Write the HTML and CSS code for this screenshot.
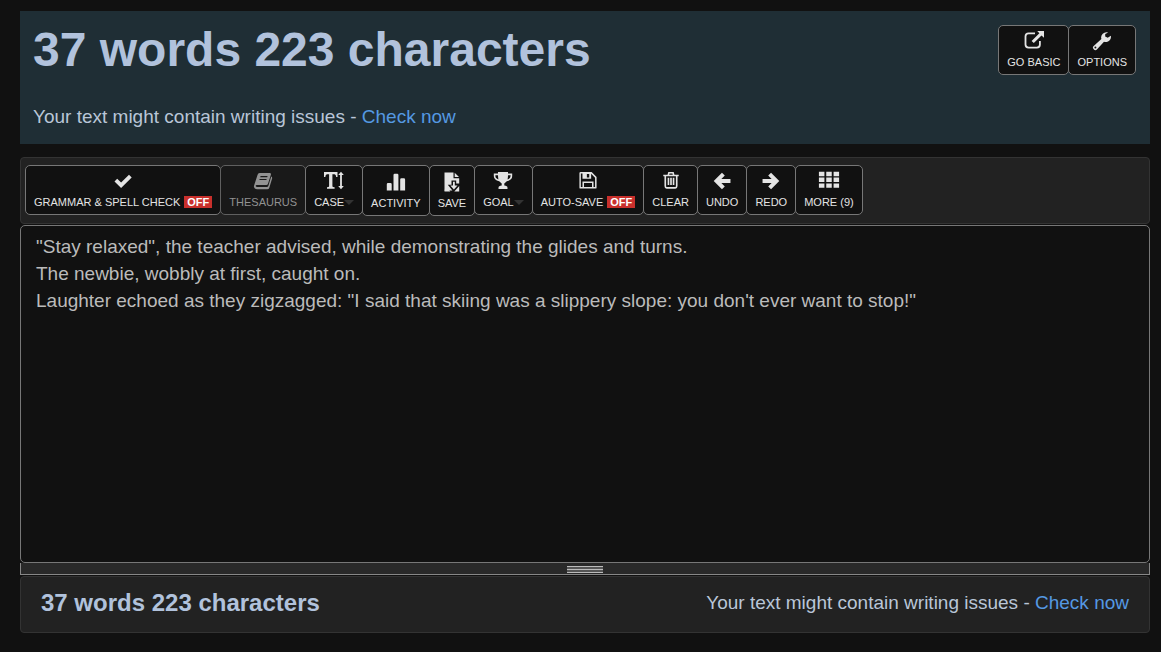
FILE: index.html
```
<!DOCTYPE html>
<html lang="en">
<head>
<meta charset="utf-8">
<meta name="viewport" content="width=device-width, initial-scale=1">
<title>Word Counter</title>
<link rel="stylesheet" href="styles.css">
</head>
<body>
<main class="page">
  <header class="summary">
    <div class="summary-text">
      <h1 class="summary-title">37 words 223 characters</h1>
      <p class="notice">Your text might contain writing issues - <a class="link" href="#check">Check now</a></p>
    </div>
    <nav class="buttons">
      <button class="btn" type="button">
        <svg class="icon" viewBox="0 1 20 20"><path d="M11 3.400H4.600Q1.500 3.400 1.500 6.400v8.200q0 3 3.100 3h8.300q3 0 3-3v-3.500" fill="none" stroke="currentColor" stroke-width="1.800"/><path d="M13 .8h7v7l-2.500-2.400-7.700 7.700-2.200-2.200 7.800-7.700z"/></svg>
        <span class="label">GO BASIC</span>
      </button>
      <button class="btn" type="button">
        <svg class="icon" viewBox="0 0 20 20"><path fill-rule="evenodd" d="M16.200 1.500a5.300 5.300 0 0 0-6.800 6.600L1.700 14.900a2.400 2.400 0 0 0 3.400 3.400l6.900-7.600a5.300 5.300 0 0 0 6.900-6l-3.200 2.100-2.500-1.300v-2.500zM3.400 15.600a1 1 0 1 1 0 2 1 1 0 0 1 0-2z"/></svg>
        <span class="label">OPTIONS</span>
      </button>
    </nav>
  </header>

  <section class="toolbar buttons" aria-label="Editor tools">
    <button class="btn" type="button">
      <svg class="icon" viewBox="0 0 20 20"><path d="M1.500 10.500 4.200 7.800l3.900 3.800 7.900-7.900 2.700 2.700L8.100 17z"/></svg>
      <span class="label">GRAMMAR &amp; SPELL CHECK <span class="badge">OFF</span></span>
    </button>
    <button class="btn btn-dim" type="button" disabled>
      <svg class="icon" viewBox="0 0 20 20"><path fill-rule="evenodd" d="M6.600 2h10.200q1.500.2 1.100 1.700L15 12.700q-.4 1.200-1.700 1.200H3.800q-1.400.3-1 1.400.3.700 1.300.7h9.700q1.100 0 1.500-1.100l2.900-9.300q1.300.6.900 1.900l-2.800 9.200q-.5 1.500-2 1.500H3.900q-2 0-2.800-1.900-.4-1 0-1.900L4.500 4Q5 2 6.600 2zm1 3.100-.4 1.200h7l.4-1.200zm-.9 2.800-.4 1.200h7l.4-1.200z"/></svg>
      <span class="label">THESAURUS</span>
    </button>
    <button class="btn" type="button">
      <svg class="icon" viewBox="0 0 20 20"><path d="M0 1h13.500v5h-1.300q-.2-2.700-1.700-2.700H8.400v12q0 1 2.200 1v1.400H3v-1.400q2.100 0 2.100-1v-12H3q-1.500 0-1.700 2.700H0z"/><path d="m17 .8 2.800 3.300h-1.900v10.800h1.900L17 18.200l-2.800-3.300h1.900V4.100h-1.900z"/></svg>
      <span class="label">CASE<span class="caret"></span></span>
    </button>
    <button class="btn btn-tall" type="button">
      <svg class="icon" viewBox="0 0 20 20"><path d="M.8 12.200q0-1.200 1.200-1.200h2.500q1.200 0 1.200 1.200V18.500H.8zM7.500 3q0-1.200 1.200-1.200h2.500q1.200 0 1.200 1.200v15.500H7.500zM14.200 7.500q0-1.200 1.200-1.200h2.500q1.200 0 1.200 1.200v11h-4.900z"/></svg>
      <span class="label">ACTIVITY</span>
    </button>
    <button class="btn btn-tall" type="button">
      <svg class="icon" viewBox="0 0 20 20"><path d="M2.500.5h9v5.700h5.700v5.300h-3V8.500H9.500v4.200H5.800l4.600 5.800H2.500z"/><path d="M12.700.7 17 5h-4.300zM11 9.800h1.800v3.800h2.700l-3.600 3.900-3.600-3.900H11zM2.500 18l2.800-2.400 3 3.900H2.500zM17.200 14v5.500h-4.900z"/></svg>
      <span class="label">SAVE</span>
    </button>
    <button class="btn" type="button">
      <svg class="icon" viewBox="0 0 20 20"><path fill-rule="evenodd" d="M5 1h10v1.600h4.200v2.500q0 4.100-5.400 5.200-1.500 1.600-2.500 2.100v2.100q3.200.2 3.200 2.300v1.200h-9v-1.200q0-2.100 3.200-2.300v-2.100q-1-.5-2.500-2.100Q.8 9.200.8 5.100V2.600H5zM2.400 4.200v.9q0 2.500 3 3.400Q5 6.300 5 4.200zm12.600 0q0 2.100-.4 4.300 3-.9 3-3.400v-.9z"/></svg>
      <span class="label">GOAL<span class="caret"></span></span>
    </button>
    <button class="btn" type="button">
      <svg class="icon" viewBox="-.5 0 21 21"><path fill-rule="evenodd" d="M2.500 1h11.300L19 6.200v11.300q0 1-1 1H2q-1 0-1-1V2q0-1 1.500-1zm0 1.600v14.300h1.700V11h11.600v5.900h1.600V7L13.300 2.900v5.300H4.200V2.600zm3.300 10v4.300h8.400v-4.300zm3-9.400v3.500h2.500V3.200z"/></svg>
      <span class="label">AUTO-SAVE <span class="badge">OFF</span></span>
    </button>
    <button class="btn" type="button">
      <svg class="icon" viewBox="-1 0 22 22"><path fill="none" stroke="currentColor" stroke-width="1.800" d="M1.500 5h17M7 4.500l.7-2.600h4.600l.7 2.600M3.700 5v11.500q0 2 1.500 2h9.600q1.500 0 1.500-2V5M7.200 7.500v8M10 7.500v8M12.800 7.500v8"/></svg>
      <span class="label">CLEAR</span>
    </button>
    <button class="btn" type="button">
      <svg class="icon" viewBox="-1 -1 22 22"><path fill="none" stroke="currentColor" stroke-width="4.400" d="M11.500 2.500 4 10l7.500 7.500M4.500 10h14.800"/></svg>
      <span class="label">UNDO</span>
    </button>
    <button class="btn" type="button">
      <svg class="icon" viewBox="-1 -1 22 22"><path fill="none" stroke="currentColor" stroke-width="4.400" d="M8.500 2.500 16 10l-7.500 7.500M15.500 10H.7"/></svg>
      <span class="label">REDO</span>
    </button>
    <button class="btn" type="button">
      <svg class="icon icon-wide" viewBox="0 0 24 20"><path d="M1 0h6v4.700H1zM9 0h6v4.700H9zM17 0h6v4.700h-6zM1 6.300h6V11H1zM9 6.300h6V11H9zM17 6.300h6V11h-6zM1 12.600h6v4.700H1zM9 12.600h6v4.700H9zM17 12.600h6v4.700h-6z"/></svg>
      <span class="label">MORE (9)</span>
    </button>
  </section>

  <textarea class="editor" rows="12" aria-label="Your text" spellcheck="false">"Stay relaxed", the teacher advised, while demonstrating the glides and turns.
The newbie, wobbly at first, caught on.
Laughter echoed as they zigzagged: "I said that skiing was a slippery slope: you don't ever want to stop!"</textarea>
  <div class="resizer"><span class="grip"></span></div>

  <footer class="footer">
    <h2 class="footer-title">37 words 223 characters</h2>
    <p class="notice">Your text might contain writing issues - <a class="link" href="#check">Check now</a></p>
  </footer>
</main>
</body>
</html>
```
FILE: styles.css
```
* {
  box-sizing: border-box;
}

body {
  margin: 0;
  background: #111;
  color: #b1c2dc;
  font-family: "Liberation Sans", Arial, sans-serif;
}

h1, h2, p {
  margin: 0;
}

.page {
  display: flex;
  flex-direction: column;
  padding: 11px 11px 19px 20px;
}

.summary {
  display: flex;
  justify-content: space-between;
  align-items: flex-start;
  margin-bottom: 13px;
  padding: 14px 14px 13px 13px;
  background: #1f2e35;
}

.summary-title {
  margin-bottom: 28px;
  font-size: 48px;
  line-height: 50px;
}

.notice {
  color: #b9c6d8;
  font-size: 19px;
  line-height: 28px;
}

.link {
  color: #5599e2;
  text-decoration: none;
}

.buttons {
  display: flex;
  align-items: flex-start;
}

.btn {
  display: flex;
  flex-direction: column;
  align-items: center;
  gap: 3px;
  padding: 5px 8px 4px;
  border: 1px solid #777;
  border-radius: 5px;
  background: #111;
  color: #e4e4e4;
  font: inherit;
}

.btn + .btn {
  margin-left: -1px;
}

.btn-tall {
  padding-top: 6px;
}

.btn-dim {
  background: #191919;
  border-color: #606060;
  color: #929292;
}

.icon {
  width: 20px;
  height: 20px;
  fill: currentColor;
}

.icon-wide {
  width: 22px;
}

.label {
  display: flex;
  align-items: center;
  gap: 4px;
  font-size: 11px;
  line-height: 16px;
  white-space: nowrap;
}

.badge {
  padding: 0 3px;
  background: #c9302c;
  color: #fff;
  font-weight: bold;
  line-height: 12px;
}

.caret {
  border: 5px solid transparent;
  border-top-color: #333;
  border-bottom: 0;
  margin-left: -4px;
}

.toolbar {
  flex-wrap: wrap;
  margin-bottom: 1px;
  padding: 7px 4px;
  border: 1px solid #333;
  border-radius: 4px;
  background: #222;
}

.toolbar .btn {
  flex: 0 0 auto;
}

.editor {
  display: block;
  width: 100%;
  margin: 0;
  padding: 7px 15px 5px;
  border: 1px solid #777;
  border-radius: 5px;
  background: #111;
  color: #bbb;
  font: 19px/27px "Liberation Sans", Arial, sans-serif;
  resize: none;
  outline: none;
}

.resizer {
  display: flex;
  justify-content: center;
  padding: 3px 0 1px;
  border: 1px solid #888;
  border-top: 0;
  background: #292929;
}

.grip {
  width: 36px;
  height: 7px;
  border: solid #bbb;
  border-width: 1px 0;
  background: linear-gradient(#555 0 2px, #bbb 2px 3px, #555 3px);
}

.footer {
  display: flex;
  justify-content: space-between;
  align-items: center;
  margin-top: 1px;
  padding: 12px 20px 15px;
  border: 1px solid #333;
  border-radius: 4px;
  background: #222;
}

.footer-title {
  font-size: 24px;
  line-height: 28px;
}
```
